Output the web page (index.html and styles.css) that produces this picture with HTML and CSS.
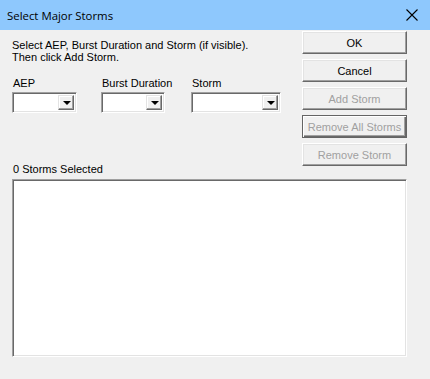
FILE: index.html
```html
<!DOCTYPE html>
<html lang="en">
<head>
    <meta charset="UTF-8">
    <title>Select Major Storms</title>
    <link rel="stylesheet" href="styles.css">
</head>
<body>
    <div class="window">
        <div class="titlebar">
            <span class="title">Select Major Storms</span>
            <svg class="close" width="12" height="12" viewBox="0 0 12 12">
                <path d="M0.5 0.5 L11.5 11.5 M11.5 0.5 L0.5 11.5" stroke="#000" stroke-width="1.1" fill="none"/>
            </svg>
        </div>
        <div class="content">
            <div class="top">
                <div class="left">
                    <p class="intro">Select AEP, Burst Duration and Storm (if visible).<br>Then click Add Storm.</p>
                    <div class="pickers">
                        <div class="picker">
                            <label>AEP</label>
                            <div class="combo w-aep"><span class="drop"><i></i></span></div>
                        </div>
                        <div class="picker">
                            <label>Burst Duration</label>
                            <div class="combo w-burst"><span class="drop"><i></i></span></div>
                        </div>
                        <div class="picker">
                            <label>Storm</label>
                            <div class="combo w-storm"><span class="drop"><i></i></span></div>
                        </div>
                    </div>
                </div>
                <div class="buttons">
                    <button class="btn">OK</button>
                    <button class="btn">Cancel</button>
                    <button class="btn" disabled>Add Storm</button>
                    <button class="btn default" disabled>Remove All Storms</button>
                    <button class="btn" disabled>Remove Storm</button>
                </div>
            </div>
            <div class="count">0 Storms Selected</div>
            <div class="listbox"></div>
        </div>
    </div>
</body>
</html>
```

FILE: styles.css
```css
html, body {
    margin: 0;
    padding: 0;
}
body {
    width: 430px;
    height: 379px;
    background-color: #f0f0f0;
    font-family: "Liberation Sans", Arial, sans-serif;
    font-size: 11px;
    color: #000;
    overflow: hidden;
}
.titlebar {
    height: 30px;
    background-color: #8ec8fd;
    display: flex;
    align-items: center;
    justify-content: space-between;
    padding: 0 12px 0 7px;
}
.title {
    font-family: "Open Sans", "Noto Sans", sans-serif;
    font-size: 11.4px;
    color: #000;
}
.content {
    padding: 0 23px 0 12px;
}
.top {
    display: flex;
    justify-content: space-between;
}
.left {
    padding-top: 9px;
}
.intro {
    margin: 0;
    line-height: 12px;
}
.pickers {
    display: flex;
    margin-top: 14px;
}
.picker {
    display: flex;
    flex-direction: column;
}
.picker label {
    line-height: 13px;
    padding-left: 1px;
    margin-bottom: 2px;
}
.w-aep { width: 65px; margin-right: 24px; }
.w-burst { width: 64px; margin-right: 26px; }
.w-storm { width: 90px; }
.combo {
    height: 21px;
    box-sizing: border-box;
    background-color: #fff;
    border: 1px solid;
    border-color: #a0a0a0 #fff #fff #a0a0a0;
    box-shadow: inset 1px 1px #696969, inset -1px -1px #e3e3e3;
    display: flex;
    justify-content: flex-end;
    padding: 2px;
}
.drop {
    width: 16px;
    box-sizing: border-box;
    background-color: #f0f0f0;
    border: 1px solid;
    border-color: #e3e3e3 #696969 #696969 #e3e3e3;
    box-shadow: inset -1px -1px #a0a0a0, inset 1px 1px #fff;
    display: flex;
    align-items: center;
    justify-content: center;
}
.drop i {
    width: 0;
    height: 0;
    border-left: 4px solid transparent;
    border-right: 4px solid transparent;
    border-top: 4px solid #000;
    margin-left: 1px;
}
.buttons {
    display: flex;
    flex-direction: column;
    gap: 5px;
    padding-top: 1px;
}
.btn {
    width: 105px;
    height: 23px;
    box-sizing: border-box;
    font-family: "Liberation Sans", Arial, sans-serif;
    font-size: 11px;
    color: #000;
    background-color: #f0f0f0;
    border: 1px solid;
    border-color: #fff #696969 #696969 #fff;
    box-shadow: inset -1px -1px #a0a0a0, inset 1px 1px #e3e3e3;
    padding: 0;
}
.btn:disabled {
    color: #a0a0a0;
}
.btn.default {
    border: 1px solid #646464;
    box-shadow: inset 1px 1px #fff, inset -1px -1px #696969, inset -2px -2px #a0a0a0;
}
.count {
    margin-top: -3px;
    line-height: 13px;
    padding-left: 1px;
}
.listbox {
    margin-top: 3px;
    height: 178px;
    box-sizing: border-box;
    background-color: #fff;
    border: 1px solid;
    border-color: #a0a0a0 #fff #fff #a0a0a0;
    box-shadow: inset 1px 1px #696969, inset -1px -1px #e3e3e3;
}
```
